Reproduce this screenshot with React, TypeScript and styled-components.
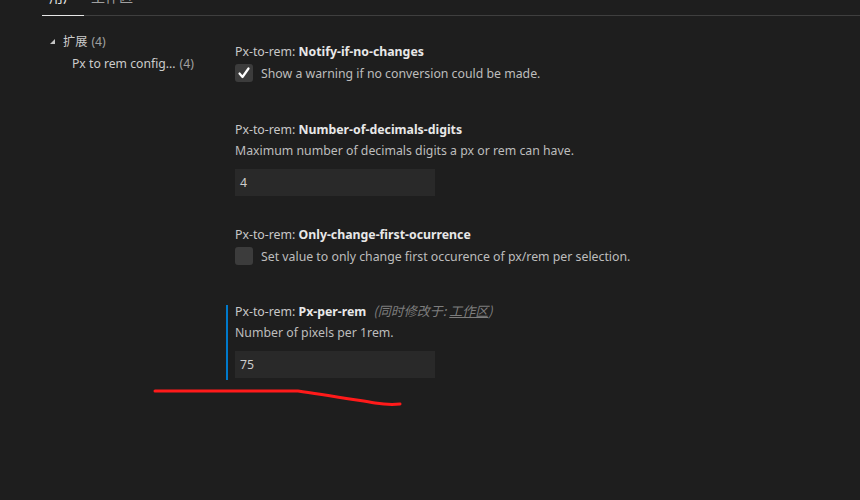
import React from "react";
import styled, { createGlobalStyle } from "styled-components";

const Global = createGlobalStyle`
  html, body { margin: 0; padding: 0; background: #1e1e1e; }
  body { font-family: "Noto Sans", "Noto Sans CJK SC", sans-serif; }
`;

const Page = styled.div`
  width: 860px;
  height: 500px;
  background: #1e1e1e;
  position: relative;
  overflow: hidden;
  color: #cccccc;
`;

const TabBar = styled.div`
  display: flex;
  height: 15px;
  margin-left: 42px;
  border-bottom: 1px solid #3f3f3f;
  align-items: flex-end;
`;

const Tab = styled.div<{ $active?: boolean }>`
  font-size: 14px;
  line-height: 20px;
  padding: 0 7px 9px 7px;
  color: ${(p) => (p.$active ? "#e7e7e7" : "#a0a0a0")};
  border-bottom: ${(p) => (p.$active ? "1px solid #e7e7e7" : "1px solid transparent")};
  margin-bottom: -1px;
  font-family: "Noto Sans CJK SC", sans-serif;
`;

const Body = styled.div`
  display: flex;
`;

const Tree = styled.div`
  width: 178px;
  padding-top: 14px;
  flex-shrink: 0;
`;

const TreeRow = styled.div<{ $indent: number }>`
  display: flex;
  align-items: center;
  height: 22px;
  padding-left: ${(p) => p.$indent}px;
  font-size: 12.2px;
  color: #cccccc;
  white-space: nowrap;
`;

const Caret = styled.span`
  width: 0;
  height: 0;
  border-left: 5px solid transparent;
  border-bottom: 5px solid #c5c5c5;
  margin-right: 8px;
`;

const Count = styled.span`
  color: #a0a0a0;
  margin-left: 4px;
`;

const Settings = styled.div`
  display: flex;
  flex-direction: column;
  padding-top: 26px;
`;

const Item = styled.div<{ $focused?: boolean }>`
  margin-left: ${(p) => (p.$focused ? "48px" : "57px")};
  padding-left: ${(p) => (p.$focused ? "7px" : "0")};
  padding-bottom: ${(p) => (p.$focused ? "2px" : "0")};
  border-left: ${(p) => (p.$focused ? "2px solid #007acc" : "none")};
`;

const Title = styled.div<{ $tight?: boolean }>`
  font-size: 12.3px;
  line-height: ${(p) => (p.$tight ? "12px" : "20px")};
  margin-bottom: ${(p) => (p.$tight ? "5px" : "0")};
  color: #c8c8c8;
  white-space: nowrap;
`;

const Key = styled.span`
  font-weight: 700;
  color: #e8e8e8;
`;

const Modified = styled.span`
  font-style: italic;
  color: #7d7d7d;
  margin-left: 7px;
  font-family: "Noto Sans CJK SC", sans-serif;
  font-size: 13px;
`;

const Link = styled.span`
  text-decoration: underline;
`;

const Desc = styled.div`
  font-size: 12.3px;
  line-height: 20px;
  color: #bdbdbd;
  margin-top: 1px;
  white-space: nowrap;
`;

const CheckRow = styled.div`
  display: flex;
  align-items: center;
  height: 20px;
  gap: 8px;
  margin-top: 1px;
  font-size: 12.3px;
  color: #bdbdbd;
  white-space: nowrap;
`;

const Box = styled.div`
  width: 18px;
  height: 18px;
  border-radius: 3px;
  background: #3c3c3c;
  display: flex;
  align-items: center;
  justify-content: center;
`;

const Input = styled.div`
  width: 195px;
  height: 27px;
  background: #292929;
  margin-top: 8px;
  display: flex;
  align-items: center;
  padding-left: 5px;
  font-size: 12.3px;
  color: #cccccc;
`;

const Gap = styled.div<{ $h: number }>`
  height: ${(p) => p.$h}px;
`;

const Scribble = styled.svg`
  position: absolute;
  left: 150px;
  top: 385px;
`;

export default function App() {
  return (
    <Page>
      <Global />
      <TabBar>
        <Tab $active>用户</Tab>
        <Tab>工作区</Tab>
      </TabBar>
      <Body>
        <Tree>
          <TreeRow $indent={50}>
            <Caret />
            扩展<Count>(4)</Count>
          </TreeRow>
          <TreeRow $indent={72}>
            Px to rem config...<Count>(4)</Count>
          </TreeRow>
        </Tree>
        <Settings>
          <Item>
            <Title>
              Px-to-rem: <Key>Notify-if-no-changes</Key>
            </Title>
            <CheckRow>
              <Box>
                <svg width="14" height="14" viewBox="0 0 14 14">
                  <path d="M2.5 7.5 L5.5 11 L11.5 2.5" stroke="#ffffff" strokeWidth="2.2" fill="none" strokeLinecap="round" strokeLinejoin="round" />
                </svg>
              </Box>
              Show a warning if no conversion could be made.
            </CheckRow>
          </Item>
          <Gap $h={37} />
          <Item>
            <Title>
              Px-to-rem: <Key>Number-of-decimals-digits</Key>
            </Title>
            <Desc>Maximum number of decimals digits a px or rem can have.</Desc>
            <Input>4</Input>
          </Item>
          <Gap $h={29} />
          <Item>
            <Title>
              Px-to-rem: <Key>Only-change-first-ocurrence</Key>
            </Title>
            <CheckRow>
              <Box />
              Set value to only change first occurence of px/rem per selection.
            </CheckRow>
          </Item>
          <Gap $h={39} />
          <Item $focused>
            <Title $tight>
              Px-to-rem: <Key>Px-per-rem</Key>
              <Modified>
                (同时修改于: <Link>工作区</Link>)
              </Modified>
            </Title>
            <Desc>Number of pixels per 1rem.</Desc>
            <Input>75</Input>
          </Item>
        </Settings>
      </Body>
      <Scribble width="260" height="30" viewBox="0 0 260 30">
        <path
          d="M5 6 L148 6 C 170 9, 200 14, 225 18 C 235 19.5, 245 19.5, 250 19"
          stroke="#ff1a1a"
          strokeWidth="3"
          fill="none"
          strokeLinecap="round"
        />
      </Scribble>
    </Page>
  );
}
